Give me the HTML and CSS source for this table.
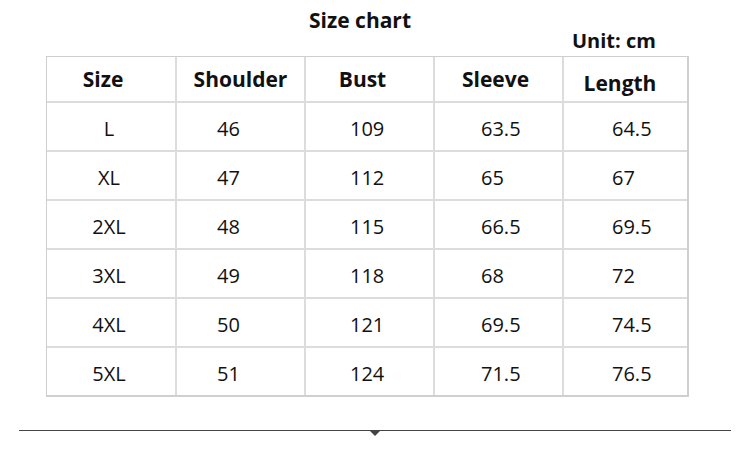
FILE: index.html
```html
<!DOCTYPE html>
<html>
<head>
<meta charset="utf-8">
<link rel="stylesheet" href="styles.css">
</head>
<body>
<div class="page">
  <div class="title">Size chart</div>
  <div class="unit">Unit: cm</div>
  <div class="chart">
    <div class="row head">
      <div class="cell c1">Size</div>
      <div class="cell c2">Shoulder</div>
      <div class="cell c3">Bust</div>
      <div class="cell c4">Sleeve</div>
      <div class="cell c5 low">Length</div>
    </div>
    <div class="row"><div class="cell c1">L</div><div class="cell c2">46</div><div class="cell c3">109</div><div class="cell c4">63.5</div><div class="cell c5">64.5</div></div>
    <div class="row"><div class="cell c1">XL</div><div class="cell c2">47</div><div class="cell c3">112</div><div class="cell c4">65</div><div class="cell c5">67</div></div>
    <div class="row"><div class="cell c1">2XL</div><div class="cell c2">48</div><div class="cell c3">115</div><div class="cell c4">66.5</div><div class="cell c5">69.5</div></div>
    <div class="row"><div class="cell c1">3XL</div><div class="cell c2">49</div><div class="cell c3">118</div><div class="cell c4">68</div><div class="cell c5">72</div></div>
    <div class="row"><div class="cell c1">4XL</div><div class="cell c2">50</div><div class="cell c3">121</div><div class="cell c4">69.5</div><div class="cell c5">74.5</div></div>
    <div class="row"><div class="cell c1">5XL</div><div class="cell c2">51</div><div class="cell c3">124</div><div class="cell c4">71.5</div><div class="cell c5">76.5</div></div>
  </div>
  <div class="divider"><span class="arrow"></span></div>
</div>
</body>
</html>
```
FILE: styles.css
```css
html, body {
  margin: 0;
  padding: 0;
  background: #fff;
}
.page {
  width: 750px;
  height: 453px;
  font-family: "Open Sans", "Noto Sans", sans-serif;
  color: #111;
  display: flex;
  flex-direction: column;
}
.title {
  font-weight: 700;
  font-size: 21px;
  line-height: 24px;
  padding-top: 8px;
  padding-left: 309px;
}
.unit {
  font-weight: 700;
  font-size: 20px;
  line-height: 22px;
  padding-left: 572px;
  margin-top: -2px;
}
.chart {
  margin-left: 46px;
  margin-top: 4px;
  width: 643px;
  border: 1px solid #cfcfcf;
  border-bottom-width: 2px;
  border-right-width: 2px;
  box-sizing: border-box;
  display: flex;
  flex-direction: column;
}
.row {
  display: grid;
  grid-template-columns: 128px 129px 129px 129px 126px;
  height: 49px;
  border-top: 2px solid #dcdcdc;
  box-sizing: border-box;
  font-size: 20px;
  align-items: center;
}
.row.head {
  height: 44px;
  border-top: none;
  font-weight: 700;
  font-size: 21px;
}
.cell {
  height: 100%;
  display: flex;
  align-items: center;
  border-left: 2px solid #dcdcdc;
  box-sizing: border-box;
  padding-top: 4px;
}
.cell.c1 {
  border-left: none;
  justify-content: center;
  padding-right: 4px;
}
.head .cell { padding-top: 0; }
.head .cell.c1 { padding-right: 16px; }
.head .cell.c2 { justify-content: center; padding-left: 0; }
.head .cell.c3 { justify-content: center; padding-right: 14px; }
.head .cell.c4 { justify-content: center; padding-right: 6px; }
.head .cell.c5 { justify-content: center; padding-top: 8px; padding-right: 12px; }
.row:not(.head) .c2 { padding-left: 40px; }
.row:not(.head) .c3 { padding-left: 44px; }
.row:not(.head) .c4 { padding-left: 46px; }
.row:not(.head) .c5 { padding-left: 48px; }
.divider {
  margin-top: auto;
  margin-bottom: 22px;
  margin-left: 19px;
  width: 712px;
  height: 1px;
  background: #444;
  position: relative;
}
.arrow {
  position: absolute;
  left: 350px;
  top: 0;
  width: 0;
  height: 0;
  border-left: 6px solid transparent;
  border-right: 6px solid transparent;
  border-top: 6px solid #444;
}
```
